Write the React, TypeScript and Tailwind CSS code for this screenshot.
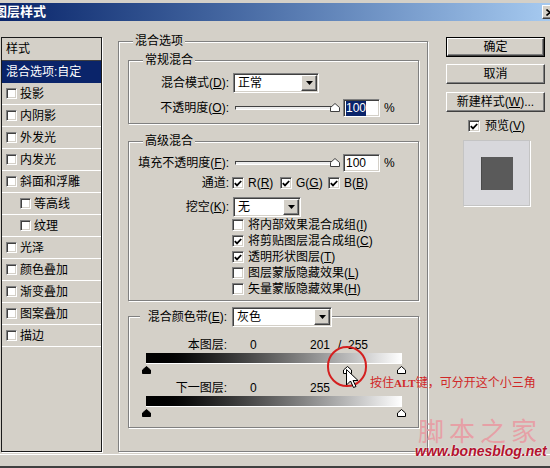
import React from 'react'

const sunken =
  'border border-t-[#808080] border-l-[#808080] border-r-white border-b-white shadow-[inset_1px_1px_0_#404040,inset_-1px_-1px_0_#d4d0c8]'
const raised =
  'border border-t-white border-l-white border-r-[#404040] border-b-[#404040] shadow-[inset_-1px_-1px_0_#808080]'
const etched = 'border border-[#808080] shadow-[inset_1px_1px_0_#fff,1px_1px_0_#fff]'

function Box({ on = false, small = false }: { on?: boolean; small?: boolean }) {
  return (
    <span
      className={`${small ? 'w-[11px] h-[11px]' : 'w-[12px] h-[12px]'} shrink-0 bg-white ${sunken} flex items-center justify-center`}
    >
      {on && (
        <svg width="8" height="7" viewBox="0 0 8 7">
          <path d="M0.8 3.2L3 5.4L7.2 1" stroke="#000" strokeWidth="1.8" fill="none" />
        </svg>
      )}
    </span>
  )
}

function Select({ value, width }: { value: string; width: string }) {
  return (
    <div className={`${width} h-[20px] bg-white ${sunken} flex items-center justify-between p-[1px]`}>
      <span className="pl-[3px]">{value}</span>
      <span className={`w-[16px] h-full bg-[#d4d0c8] ${raised} flex items-center justify-center`}>
        <svg width="7" height="4" viewBox="0 0 7 4">
          <path d="M0 0H7L3.5 4Z" fill="#000" />
        </svg>
      </span>
    </div>
  )
}

function Thumb({ dark = false }: { dark?: boolean }) {
  return (
    <svg width="9" height="8" viewBox="0 0 9 8">
      <path d="M4.5 0.5L8.5 4V7.5H0.5V4Z" fill={dark ? '#000' : '#fff'} stroke="#000" />
    </svg>
  )
}

function Legend({ children }: { children: React.ReactNode }) {
  return <div className="ml-[14px] -mt-[8px] h-[14px] px-[2px] bg-[#d4d0c8] w-fit">{children}</div>
}

function OpacityRow({ label, hi = false }: { label: React.ReactNode; hi?: boolean }) {
  return (
    <div className="flex items-center h-[18px]">
      <div className="w-[100px] text-right">{label}</div>
      <div className="relative ml-[6px] w-[108px] h-full flex items-center">
        <div className="w-[100px] h-[4px] border border-t-[#404040] border-l-[#404040] border-r-[#808080] border-b-white bg-[#ececec]" />
        <svg className="absolute left-[95px] top-[4px]" width="10" height="9" viewBox="0 0 10 9">
          <path d="M5 0.5L9.5 4.5V8.5H0.5V4.5Z" fill="#fff" stroke="#404040" />
        </svg>
      </div>
      <div className={`w-[37px] h-[18px] bg-white ${sunken} flex items-center pl-[2px]`}>
        <span className={hi ? 'bg-[#0a246a] text-white leading-[15px]' : 'leading-[15px]'}>100</span>
      </div>
      <span className="ml-[4px]">%</span>
    </div>
  )
}

function Button({ children, main = false }: { children: React.ReactNode; main?: boolean }) {
  const face = <div className={`h-full ${raised} flex items-center justify-center`}>{children}</div>
  return main ? <div className="h-[20px] border border-black">{face}</div> : <div className="h-[20px]">{face}</div>
}

const styles = [
  { t: '投影' },
  { t: '内阴影' },
  { t: '外发光' },
  { t: '内发光' },
  { t: '斜面和浮雕' },
  { t: '等高线', sub: true },
  { t: '纹理', sub: true },
  { t: '光泽' },
  { t: '颜色叠加' },
  { t: '渐变叠加' },
  { t: '图案叠加' },
  { t: '描边' },
]

const options = [
  { on: false, t: '将内部效果混合成组', k: 'I' },
  { on: true, t: '将剪贴图层混合成组', k: 'C' },
  { on: true, t: '透明形状图层', k: 'T' },
  { on: false, t: '图层蒙版隐藏效果', k: 'L' },
  { on: false, t: '矢量蒙版隐藏效果', k: 'H' },
]

export default function App() {
  return (
    <div className="relative w-[550px] h-[468px] overflow-hidden bg-[#d4d0c8] flex flex-col text-[12px] leading-[14px] text-black [font-family:'Liberation_Sans','Noto_Sans_CJK_SC',sans-serif]">
      {/* title bar */}
      <div className="pt-[3px]">
        <div className="h-[18px] bg-linear-to-r from-[#0a246a] to-[#a6caf0] flex items-center justify-between">
          <span className="-ml-[6px] text-white font-bold text-[13px]">图层样式</span>
          <div className={`w-[16px] h-[14px] -mr-[8px] bg-[#d4d0c8] ${raised} flex items-center justify-center`}>
            <svg width="8" height="7" viewBox="0 0 8 7">
              <path d="M0.5 0.5L7.5 6.5M7.5 0.5L0.5 6.5" stroke="#000" strokeWidth="1.6" />
            </svg>
          </div>
        </div>
      </div>

      <div className="h-[433px] flex items-start pt-[16px]">
        {/* style list */}
        <div className="ml-[1px] w-[101px] h-[415px] border border-[#1a1a1a] shadow-[1px_1px_0_#fff] flex flex-col">
          <div className="h-[23px] shrink-0 border-b border-[#404040] flex items-center pl-[4px]">样式</div>
          <div className="h-[22px] shrink-0 bg-[#0a246a] text-white flex items-center pl-[4px]">混合选项:自定</div>
          {styles.map((s) => (
            <div
              key={s.t}
              className={`h-[22px] shrink-0 border-b border-white flex items-center ${s.sub ? 'pl-[18px]' : 'pl-[4px]'}`}
            >
              <Box small />
              <span className="ml-[3px]">{s.t}</span>
            </div>
          ))}
        </div>

        {/* blending options */}
        <div className={`ml-[16px] mt-[4px] w-[310px] h-[411px] ${etched} flex flex-col`}>
          <Legend>混合选项</Legend>

          <div className={`ml-[9px] mt-[12px] w-[291px] h-[64px] ${etched} flex flex-col`}>
            <Legend>常规混合</Legend>
            <div className="mt-[6px] h-[20px] flex items-center">
              <div className="w-[100px] text-right">
                混合模式(<u>D</u>):
              </div>
              <div className="ml-[4px]">
                <Select value="正常" width="w-[86px]" />
              </div>
            </div>
            <div className="mt-[6px]">
              <OpacityRow
                hi
                label={
                  <>
                    不透明度(<u>O</u>):
                  </>
                }
              />
            </div>
          </div>

          <div className={`ml-[9px] mt-[17px] w-[291px] h-[160px] ${etched} flex flex-col`}>
            <Legend>高级混合</Legend>
            <div className="mt-[6px]">
              <OpacityRow
                label={
                  <>
                    填充不透明度(<u>F</u>):
                  </>
                }
              />
            </div>
            <div className="mt-[4px] h-[14px] flex items-center">
              <div className="w-[100px] text-right">通道:</div>
              <div className="ml-[3px] flex items-center">
                {['R', 'G', 'B'].map((c) => (
                  <div key={c} className="w-[48px] flex items-center">
                    <Box on />
                    <span className="ml-[4px]">
                      {c}(<u>{c}</u>)
                    </span>
                  </div>
                ))}
              </div>
            </div>
            <div className="mt-[7px] h-[20px] flex items-center">
              <div className="w-[100px] text-right">
                挖空(<u>K</u>):
              </div>
              <div className="ml-[4px]">
                <Select value="无" width="w-[68px]" />
              </div>
            </div>
            {options.map((o) => (
              <div key={o.k} className="h-[16px] flex items-center pl-[103px]">
                <Box on={o.on} />
                <span className="ml-[4px]">
                  {o.t}(<u>{o.k}</u>)
                </span>
              </div>
            ))}
          </div>

          <div className={`ml-[9px] mt-[15px] w-[291px] h-[112px] ${etched} flex flex-col`}>
            <div className="-mt-[10px] h-[20px] flex items-center">
              <div className="w-[103px] flex justify-end">
                <span className="bg-[#d4d0c8] pl-[8px] pr-[5px]">
                  混合颜色带(<u>E</u>):
                </span>
              </div>
              <Select value="灰色" width="w-[100px]" />
            </div>

            <div className="mt-[11px] h-[14px] flex items-center">
              <div className="w-[100px] text-right pr-[2px]">本图层:</div>
              <span className="ml-[21px] w-[60px]">0</span>
              <span className="w-[28px]">201</span>
              <span className="w-[10px]">/</span>
              <span>255</span>
            </div>
            <div className="mt-[1px] ml-[17px] w-[256px] h-[10px] bg-linear-to-r from-black to-white shadow-[0_1px_0_#fff]" />
            <div className="relative mt-[3px] ml-[17px] w-[256px] h-[8px]">
              <span className="absolute left-[-4px] top-0">
                <Thumb dark />
              </span>
              <span className="absolute left-[197px] top-0">
                <Thumb />
              </span>
              <span className="absolute left-[251px] top-0">
                <Thumb />
              </span>
            </div>

            <div className="mt-[7px] h-[14px] flex items-center">
              <div className="w-[100px] text-right pr-[2px]">下一图层:</div>
              <span className="ml-[21px] w-[60px]">0</span>
              <span>255</span>
            </div>
            <div className="mt-[1px] ml-[17px] w-[256px] h-[10px] bg-linear-to-r from-black to-white shadow-[0_1px_0_#fff]" />
            <div className="relative mt-[3px] ml-[17px] w-[256px] h-[8px]">
              <span className="absolute left-[-4px] top-0">
                <Thumb dark />
              </span>
              <span className="absolute left-[251px] top-0">
                <Thumb />
              </span>
            </div>
          </div>
        </div>

        {/* buttons and preview */}
        <div className="ml-[18px] w-[99px] flex flex-col">
          <Button main>确定</Button>
          <div className="mt-[7px]">
            <Button>取消</Button>
          </div>
          <div className="mt-[8px]">
            <Button>
              新建样式(<u>W</u>)...
            </Button>
          </div>
          <div className="mt-[7px] h-[14px] flex items-center pl-[22px]">
            <Box on />
            <span className="ml-[5px]">
              预览(<u>V</u>)
            </span>
          </div>
          <div className="mt-[7px] ml-[17px] w-[67px] h-[66px] bg-[#d8d8dc] border border-[#c4c4c4] shadow-[1px_1px_0_#fff] flex items-center justify-center">
            <div className="w-[32px] h-[33px] bg-[#5a5a5a] border-l border-[#4a4a4a]" />
          </div>
        </div>
      </div>

      <div className="h-px bg-white" />
      <div className="h-[11px]" />
      <div className="h-[2px] bg-[#404040]" />

      {/* annotations over the screenshot */}
      <div className="absolute left-[327px] top-[346px] w-[40px] h-[41px] rounded-full border-2 border-[#d42020]" />
      <svg className="absolute left-[346px] top-[369px]" width="13" height="20" viewBox="0 0 13 20">
        <path d="M0.5 0.5V16L4.5 12L7.5 18.5L10 17.5L7 11.5H12Z" fill="#fff" stroke="#000" />
      </svg>
      <div className="absolute left-[370px] top-[376px] whitespace-nowrap text-[#d02828]">
        按住<span className="[font-family:'Liberation_Serif'] font-bold text-[11px]">ALT</span>键，可分开这个小三角
      </div>
      <div className="absolute left-[418px] top-[416px] whitespace-nowrap text-[26px] leading-[27px] tracking-[5px] text-[#e6a0a6] [font-family:'Noto_Sans_CJK_SC',sans-serif]">
        脚本之家
      </div>
      <div className="absolute left-[415px] top-[444px] whitespace-nowrap text-[14px] leading-[15px] font-bold italic text-[#b3122e] [text-shadow:0_0_2px_#fff]">
        www.bonesblog.net
      </div>
    </div>
  )
}
